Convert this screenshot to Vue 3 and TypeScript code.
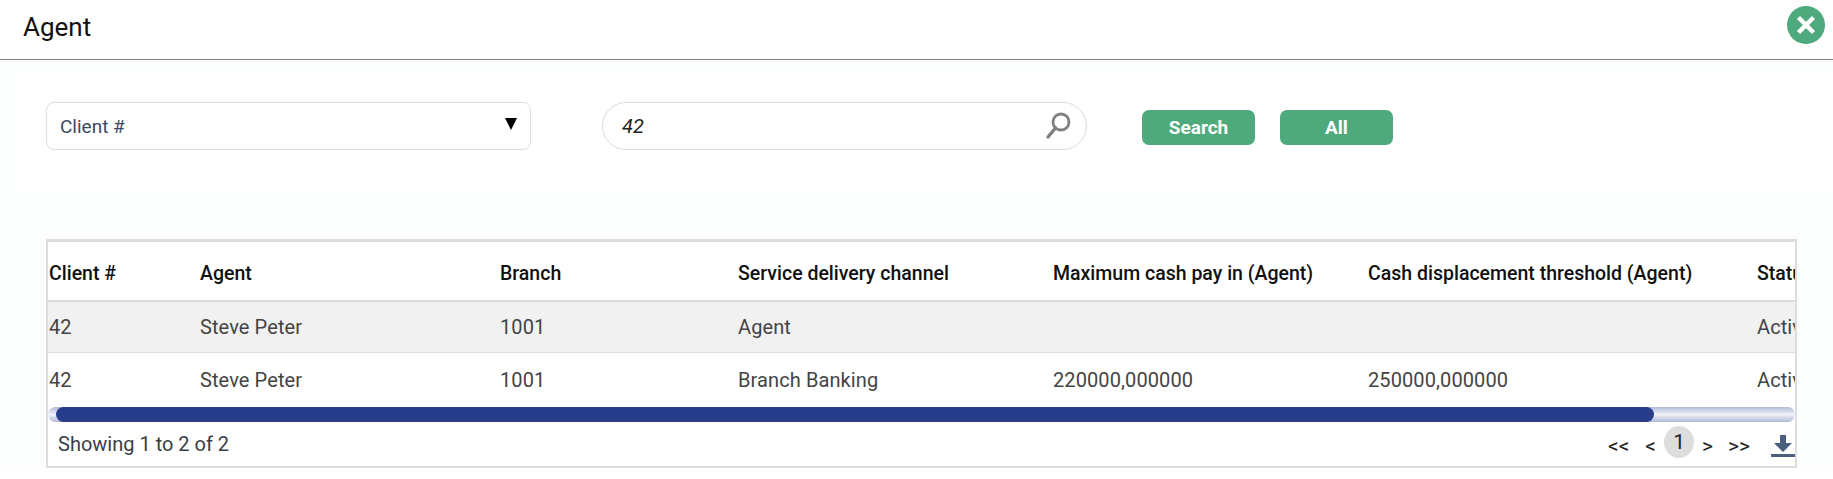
<script setup lang="ts">
const columns = [
  { label: 'Client #', width: 151 },
  { label: 'Agent', width: 300 },
  { label: 'Branch', width: 238 },
  { label: 'Service delivery channel', width: 315 },
  { label: 'Maximum cash pay in (Agent)', width: 315 },
  { label: 'Cash displacement threshold (Agent)', width: 389 },
  { label: 'Status', width: 100 }
]

const rows = [
  ['42', 'Steve Peter', '1001', 'Agent', '', '', 'Active'],
  ['42', 'Steve Peter', '1001', 'Branch Banking', '220000,000000', '250000,000000', 'Active']
]
</script>

<template>
  <div class="page">
    <header class="top-bar">
      <h1>Agent</h1>
      <button class="close-btn" aria-label="Close">
        <svg width="38" height="38" viewBox="0 0 38 38">
          <circle cx="19" cy="19" r="19" fill="#4eaa7d" />
          <path d="M11.5 11.5 L26.5 26.5 M26.5 11.5 L11.5 26.5" stroke="#fff" stroke-width="4.4" />
        </svg>
      </button>
    </header>

    <div class="content">
      <section class="filters">
        <div class="select-box">
          <span>Client #</span>
          <i class="caret"></i>
        </div>
        <div class="search-box">
          <span>42</span>
          <svg width="30" height="30" viewBox="0 0 30 30">
            <circle cx="18" cy="11" r="8" fill="none" stroke="#808080" stroke-width="2.8" />
            <path d="M12.5 17 L5 26" stroke="#808080" stroke-width="3.4" stroke-linecap="round" />
          </svg>
        </div>
        <button class="btn btn-search">Search</button>
        <button class="btn btn-all">All</button>
      </section>

      <section class="grid-wrap">
        <div class="table-clip">
          <table>
            <colgroup>
              <col v-for="c in columns" :key="c.label" :style="{ width: c.width + 'px' }" />
            </colgroup>
            <thead>
              <tr>
                <th v-for="c in columns" :key="c.label">{{ c.label }}</th>
              </tr>
            </thead>
            <tbody>
              <tr v-for="(r, i) in rows" :key="i">
                <td v-for="(v, j) in r" :key="j">{{ v }}</td>
              </tr>
            </tbody>
          </table>
        </div>
        <div class="scroll-track"><div class="scroll-thumb"></div></div>
        <footer class="grid-foot">
          <span>Showing 1 to 2 of 2</span>
          <nav class="pager">
            <span class="first">&lt;&lt;</span>
            <span class="prev">&lt;</span>
            <span class="current">1</span>
            <span class="next">&gt;</span>
            <span class="last">&gt;&gt;</span>
            <svg width="24" height="24" viewBox="0 0 24 24">
              <path d="M9 1 H15 V9 H21 L12 18 L3 9 H9 Z" fill="#4a5f80" />
              <rect x="0" y="20" width="24" height="3" fill="#4a5f80" />
            </svg>
          </nav>
        </footer>
      </section>
    </div>
  </div>
</template>

<style>
html,
body {
  margin: 0;
  background: #fff;
}
</style>

<style scoped>
.page {
  width: 1833px;
  height: 479px;
  overflow: hidden;
  font-family: Roboto, "Open Sans", sans-serif;
  color: #444;
}

.top-bar {
  height: 59px;
  display: flex;
  align-items: center;
  justify-content: space-between;
  padding: 0 8px 0 23px;
  border-bottom: 1px solid #808080;
  background: #fff;
}

.top-bar h1 {
  margin: 0 0 6px;
  font-size: 26px;
  font-weight: 400;
  color: #111;
}

.close-btn {
  padding: 0;
  border: none;
  background: none;
  height: 38px;
  margin-bottom: 9px;
}

.content {
  background: #fcfdfd;
  padding: 12px 0 0 16px;
  height: 394px;
}

.filters {
  display: flex;
  align-items: center;
  height: 108px;
  padding: 0 0 12px 30px;
  background: #fff;
}

.select-box {
  width: 485px;
  height: 48px;
  box-sizing: border-box;
  border: 1px solid #ddd;
  border-radius: 8px;
  background: #fff;
  display: flex;
  align-items: center;
  justify-content: space-between;
  padding: 0 13px;
  font-size: 19px;
  color: #3a4a63;
}

.caret {
  width: 0;
  height: 0;
  margin-bottom: 4px;
  border-left: 6px solid transparent;
  border-right: 6px solid transparent;
  border-top: 12px solid #000;
}

.search-box {
  width: 485px;
  height: 48px;
  margin-left: 71px;
  box-sizing: border-box;
  border: 1px solid #ddd;
  border-radius: 24px;
  background: #fff;
  display: flex;
  align-items: center;
  justify-content: space-between;
  padding: 0 13px 0 19px;
  font-size: 20px;
  font-style: italic;
  color: #222;
}

.btn {
  height: 35px;
  width: 113px;
  margin-top: 3px;
  border: none;
  border-radius: 7px;
  background: #4eaa7d;
  color: #fff;
  font-family: inherit;
  font-size: 19px;
  font-weight: 700;
}

.btn-search {
  margin-left: 55px;
}

.btn-all {
  margin-left: 25px;
}

.grid-wrap {
  width: 1747px;
  margin: 47px 0 0 30px;
  background: #fff;
  border: 2px solid #ddd;
  border-top-width: 3px;
}

.table-clip {
  overflow: hidden;
}

table {
  border-collapse: collapse;
  table-layout: fixed;
  width: 1808px;
  font-size: 20px;
}

th {
  height: 54px;
  padding: 4px 0 0 1px;
  text-align: left;
  font-size: 19.5px;
  font-weight: 500;
  color: #111;
  white-space: nowrap;
  overflow: hidden;
  border-bottom: 2px solid #ddd;
}

td {
  padding: 0 0 0 1px;
  white-space: nowrap;
  overflow: hidden;
  letter-spacing: 0.1px;
}

tbody tr:nth-child(1) td {
  height: 50px;
  background: #f1f1f1;
  border-bottom: 1px solid #ddd;
}

tbody tr:nth-child(2) td {
  height: 54px;
  background: #fff;
}

.scroll-track {
  height: 15px;
  border-radius: 8px;
  background: linear-gradient(#b0b9d8, #f0f2f9 50%, #b0b9d8);
  overflow: hidden;
  padding-left: 8px;
}

.scroll-thumb {
  width: 1598px;
  height: 15px;
  border-radius: 8px;
  background: #283c8c;
}

.grid-foot {
  height: 44px;
  display: flex;
  align-items: center;
  justify-content: space-between;
  padding-left: 10px;
  font-size: 20px;
  color: #3a4048;
}

.pager {
  display: flex;
  align-items: center;
  padding-top: 4px;
  font-size: 21px;
  color: #222;
}

.pager svg {
  margin-left: 21px;
}

.first {
  margin-right: 16px;
}

.current {
  width: 30px;
  height: 32px;
  margin: 0 8px 8px;
  border-radius: 50%;
  background: #ddd;
  text-align: center;
  line-height: 32px;
}

.last {
  margin-left: 15px;
}
</style>
